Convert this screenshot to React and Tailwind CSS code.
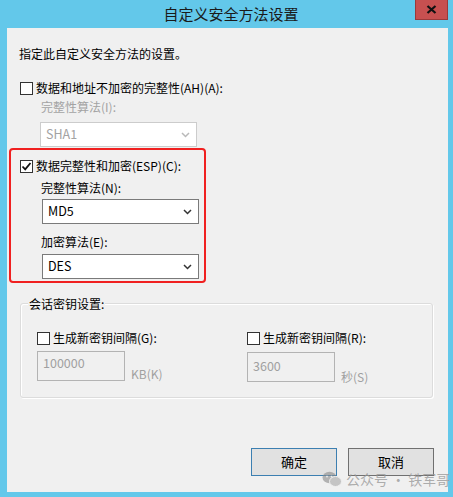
import React from 'react';

const font = { fontFamily: '"Noto Sans CJK SC", "Microsoft YaHei", sans-serif' };

function Chevron({ disabled }) {
  return (
    <svg width="9" height="6" viewBox="0 0 9 6" className="shrink-0">
      <path d="M1 1 L4.5 4.5 L8 1" fill="none" stroke={disabled ? '#b9b9b9' : '#333'} strokeWidth="1.5" />
    </svg>
  );
}

function Check({ checked }) {
  return (
    <span className="w-[13px] h-[13px] border border-[#333] bg-white flex items-center justify-center shrink-0">
      {checked && (
        <svg width="11" height="11" viewBox="0 0 11 11">
          <path d="M1.5 5.5 L4.2 8.3 L9.5 2" fill="none" stroke="#111" strokeWidth="1.8" />
        </svg>
      )}
    </span>
  );
}

function Select({ value, disabled }) {
  return (
    <div className={`ml-[33px] w-[157px] h-[25px] bg-white border flex items-center justify-between pl-[5px] pr-[6px] text-[12.5px] ${disabled ? 'border-[#cccccc] text-[#a3a3a3]' : 'border-[#7a7a7a] text-black'}`}>
      <span>{value}</span>
      <Chevron disabled={disabled} />
    </div>
  );
}

export default function App() {
  return (
    <div className="w-[453px] h-[497px] bg-[#63c8ea] relative overflow-hidden" style={font}>
      {/* title bar */}
      <div className="h-[28px] flex items-center justify-center text-[15px] text-[#1a1a1a] pl-[9px]">
        自定义安全方法设置
      </div>
      <div className="absolute right-[5px] top-0 w-[33px] h-[20px] bg-[#c75050] border border-[#9a3a3a] border-t-0 flex items-center justify-center">
        <svg width="11" height="9" viewBox="0 0 11 9">
          <path d="M1.5 1 L9.5 8 M9.5 1 L1.5 8" stroke="#111" strokeWidth="2.2" />
        </svg>
      </div>

      {/* panel */}
      <div className="ml-[7px] w-[441px] h-[464px] bg-[#f0f0f0] text-[12px] text-black flex flex-col pl-[12px]">
        <div className="mt-[18px] leading-[16px]">指定此自定义安全方法的设置。</div>

        <div className="mt-[18px] flex items-center gap-[3px] ml-[1px] leading-[16px]">
          <Check />
          <span>数据和地址不加密的完整性(AH)(A):</span>
        </div>
        <div className="mt-[3px] ml-[22px] leading-[16px] text-[#a3a3a3]">完整性算法(I):</div>
        <div className="mt-[7px] -ml-[12px]">
          <Select value="SHA1" disabled />
        </div>

        {/* highlighted section */}
        <div className="mt-[1px] -ml-[10px] w-[197px] h-[135px] border-2 border-[#f02020] rounded-[4px] flex flex-col">
          <div className="mt-[8px] ml-[9px] flex items-center gap-[3px] leading-[16px]">
            <Check checked />
            <span>数据完整性和加密(ESP)(C):</span>
          </div>
          <div className="mt-[6px] ml-[30px] leading-[16px]">完整性算法(N):</div>
          <div className="mt-[3px] -ml-[2px]"><Select value="MD5" /></div>
          <div className="mt-[10px] ml-[30px] leading-[16px]">加密算法(E):</div>
          <div className="mt-[4px] -ml-[2px]"><Select value="DES" /></div>
        </div>

        {/* session key group */}
        <div className="mt-[20px] ml-[1px] w-[413px] h-[95px] border border-[#dcdcdc] rounded-[3px] shadow-[inset_1px_1px_0_#ffffff,1px_1px_0_#ffffff] relative">
          <span className="absolute -top-[8px] left-[7px] bg-[#f0f0f0] px-[1px] leading-[16px]">会话密钥设置:</span>
          <div className="flex mt-[26px] ml-[16px]">
            <div className="w-[210px] flex flex-col">
              <div className="flex items-center gap-[3px] leading-[16px]">
                <Check />
                <span>生成新密钥间隔(G):</span>
              </div>
              <div className="mt-[5px] flex items-end gap-[6px]">
                <div className="w-[88px] h-[30px] border border-[#b3b3b3] text-[#a0a0a0] text-[12.5px] pl-[5px] pt-[3px] leading-[16px]">100000</div>
                <span className="text-[#a0a0a0] leading-[16px] -mb-[1px]">KB(K)</span>
              </div>
            </div>
            <div className="flex flex-col">
              <div className="flex items-center gap-[3px] leading-[16px]">
                <Check />
                <span>生成新密钥间隔(R):</span>
              </div>
              <div className="mt-[6px] flex items-end gap-[6px]">
                <div className="w-[88px] h-[30px] border border-[#b3b3b3] text-[#a0a0a0] text-[12.5px] pl-[5px] pt-[5px] leading-[16px]">3600</div>
                <span className="text-[#a0a0a0] leading-[16px] -mb-[3px]">秒(S)</span>
              </div>
            </div>
          </div>
        </div>

        {/* buttons */}
        <div className="mt-[50px] flex gap-[11px] ml-[232px]">
          <button className="w-[86px] h-[28px] bg-[#e1e1e1] border border-[#3c7fb1] text-[13px] flex items-center justify-center">确定</button>
          <button className="w-[86px] h-[28px] bg-[#e1e1e1] border border-[#707070] text-[13px] flex items-center justify-center">取消</button>
        </div>
      </div>

      {/* watermark */}
      <div className="absolute left-[322px] top-[470px] flex items-center gap-[4px] text-[14px] text-[#9a9a9a]/80 leading-[18px]">
        <svg width="20" height="17" viewBox="0 0 20 17" className="opacity-60">
          <ellipse cx="7.5" cy="6.5" rx="7" ry="5.8" fill="#8a8a8a" />
          <ellipse cx="13.5" cy="10.5" rx="6" ry="5" fill="#a8a8a8" stroke="#f0f0f0" strokeWidth="1" />
          <circle cx="5" cy="5.5" r="0.9" fill="#f0f0f0" />
          <circle cx="9.5" cy="5.5" r="0.9" fill="#f0f0f0" />
        </svg>
        <span>公众号 · 铁军哥</span>
      </div>
    </div>
  );
}
